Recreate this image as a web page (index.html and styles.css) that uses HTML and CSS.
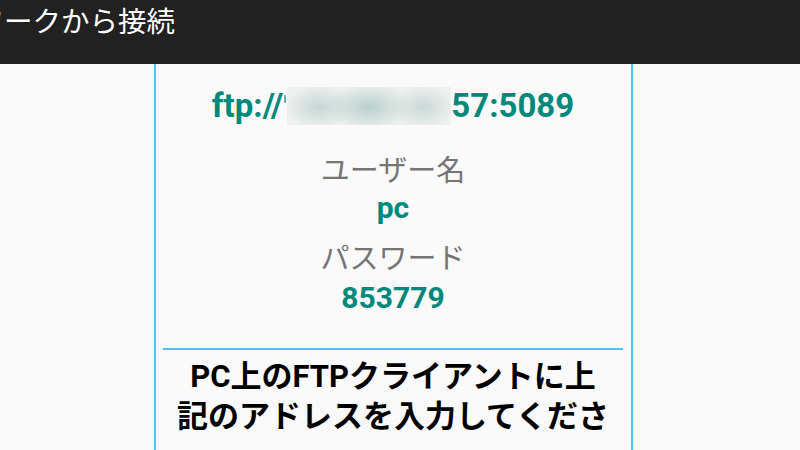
FILE: index.html
```html
<!DOCTYPE html>
<html lang="ja">
<head>
<meta charset="utf-8">
<title>ネットワークから接続</title>
<link rel="stylesheet" href="styles.css">
</head>
<body>
<header class="appbar">
  <h1 class="appbar-title">ネットワークから接続</h1>
</header>
<main class="page">
  <section class="card">
    <div class="address">ftp://<span class="sliver"></span><span class="mask" aria-label="非表示のアドレス"></span>57:5089</div>
    <div class="label label-user">ユーザー名</div>
    <div class="value value-user">pc</div>
    <div class="label label-pass">パスワード</div>
    <div class="value value-pass">853779</div>
    <hr class="divider">
    <p class="hint">PC上のFTPクライアントに上<br>記のアドレスを入力してください。</p>
  </section>
</main>
</body>
</html>
```
FILE: styles.css
```css
html, body {
  margin: 0;
  padding: 0;
}
body {
  width: 800px;
  height: 450px;
  overflow: hidden;
  background: #fafafa;
  font-family: Roboto, "Noto Sans CJK JP", sans-serif;
}
.appbar {
  height: 64px;
  background: #212121;
  display: flex;
  align-items: flex-start;
  overflow: hidden;
}
.appbar-title {
  margin: 0 0 0 -110px;
  font-family: "Noto Sans CJK JP", sans-serif;
  font-weight: 400;
  font-size: 28.5px;
  line-height: 40px;
  color: #ffffff;
  white-space: nowrap;
}
.page {
  display: flex;
  justify-content: flex-start;
}
.card {
  box-sizing: border-box;
  margin-left: 154px;
  width: 479px;
  height: 386px;
  border-left: 2px solid #4fc3f7;
  border-right: 2px solid #4fc3f7;
  padding: 22px 8px 0 7px;
  display: flex;
  flex-direction: column;
  align-items: center;
  text-align: center;
}
.card > * {
  flex-shrink: 0;
}
.address {
  font-weight: 700;
  font-size: 33px;
  line-height: 40px;
  color: #00897b;
  white-space: nowrap;
  display: flex;
  align-items: center;
}
.sliver {
  display: inline-block;
  width: 2px;
  height: 8px;
  margin: 0 1px 14px 1px;
  background: #6fb3ab;
}
.mask {
  display: inline-block;
  width: 164px;
  height: 38px;
  background:
    radial-gradient(ellipse 34px 22px at 32px 20px, rgba(180, 203, 199, 0.7), rgba(180, 203, 199, 0) 100%),
    radial-gradient(ellipse 42px 24px at 82px 20px, rgba(172, 199, 194, 0.8), rgba(172, 199, 194, 0) 100%),
    radial-gradient(ellipse 32px 22px at 136px 20px, rgba(182, 204, 200, 0.65), rgba(182, 204, 200, 0) 100%),
    linear-gradient(#eef1f0, #eef1f0);
}
.label {
  font-family: "Noto Sans CJK JP", sans-serif;
  font-size: 29px;
  line-height: 36px;
  color: #757575;
}
.label-user {
  margin-top: 24px;
}
.label-pass {
  margin-top: 12px;
}
.value {
  font-weight: 700;
  font-size: 30px;
  line-height: 36px;
  color: #00897b;
}
.value-user {
  margin-top: 4px;
}
.value-pass {
  margin-top: 6px;
}
.divider {
  align-self: stretch;
  margin: 32px 0 0 0;
  border: 0;
  height: 2px;
  background: #4fc3f7;
}
.hint {
  margin: 7px 0 0 0;
  width: 440px;
  max-height: 80px;
  overflow: hidden;
  font-weight: 700;
  font-size: 31px;
  line-height: 40px;
  color: #000000;
}
```
